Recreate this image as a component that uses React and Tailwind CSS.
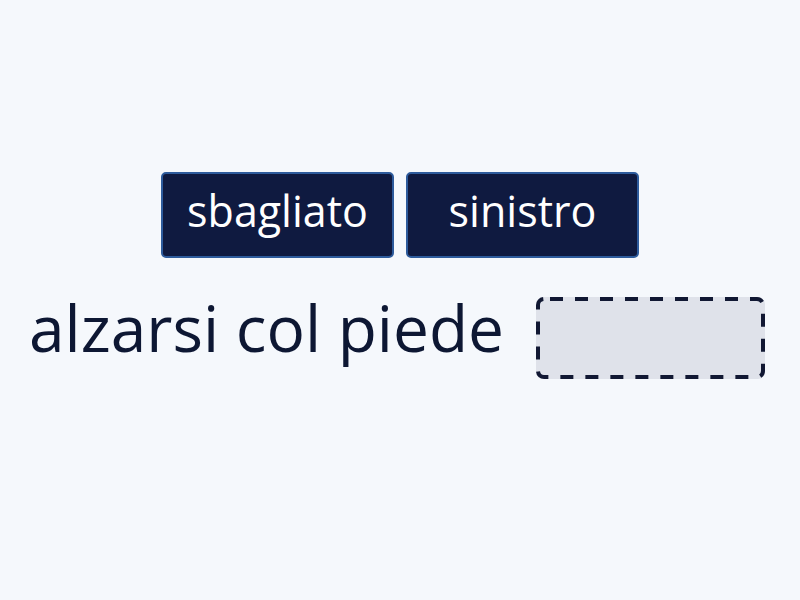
export default function App() {
  return (
    <div className="w-[800px] h-[600px] bg-[#f5f8fc] flex flex-col items-center pt-[172px]" style={{ fontFamily: '"Open Sans", "Noto Sans", sans-serif' }}>
      <div className="flex gap-[12px]">
        <div className="w-[233px] h-[86px] bg-[#0f1a40] border-2 border-[#2d5b9c] rounded-[5px] flex items-center justify-center pb-[10px] text-white text-[43px] leading-none">sbagliato</div>
        <div className="w-[233px] h-[86px] bg-[#0f1a40] border-2 border-[#2d5b9c] rounded-[5px] flex items-center justify-center pb-[10px] text-white text-[43px] leading-none">sinistro</div>
      </div>
      <div className="flex items-center mt-[38px] ml-[-6px]">
        <span className="text-[#0d1733] text-[64px] leading-none mb-[20px]">alzarsi col piede</span>
        <div className="relative ml-[32px] w-[229px] h-[82px] bg-[#dfe2ea] rounded-[7px]">
          <svg className="absolute inset-0" width="229" height="82" viewBox="0 0 229 82">
            <rect x="2" y="2" width="225" height="78" rx="6" ry="6" fill="none" stroke="#111833" strokeWidth="4" strokeDasharray="13 12" strokeDashoffset="-6" />
          </svg>
        </div>
      </div>
    </div>
  );
}
